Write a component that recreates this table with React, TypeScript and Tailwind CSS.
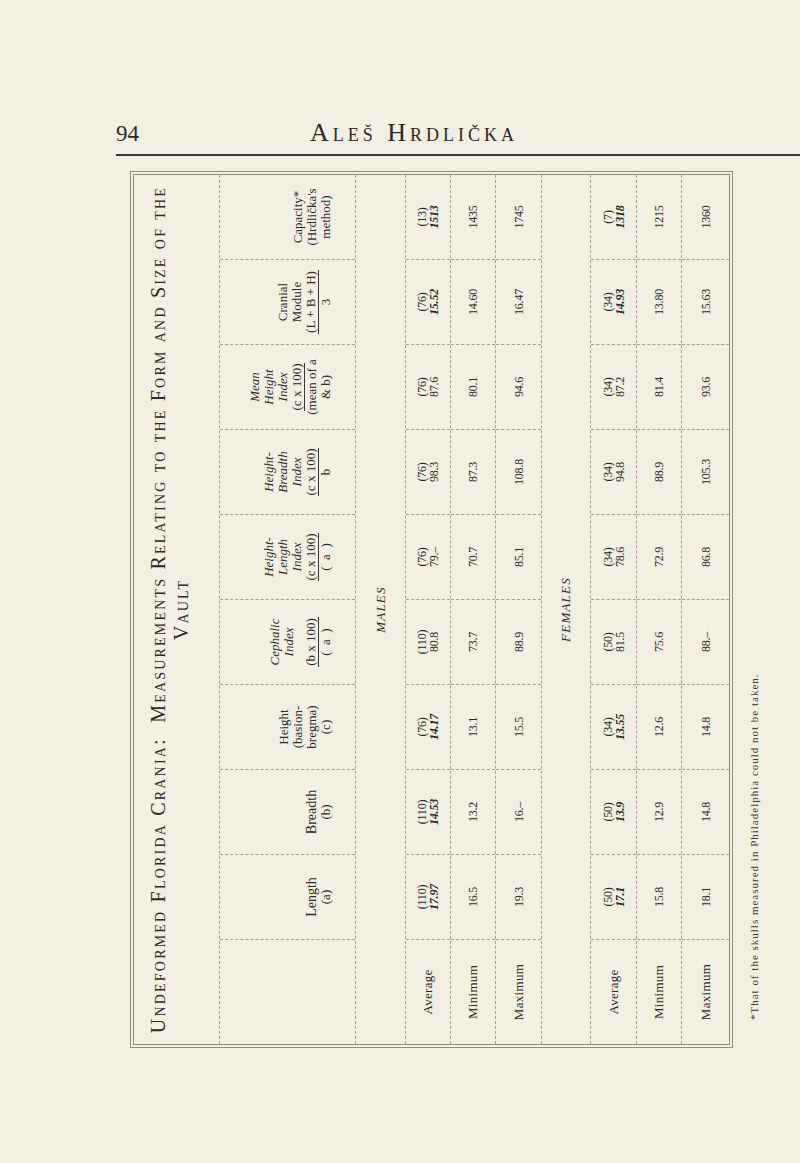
import React from "react";

type Cell = { n?: string; v: string; it?: boolean };

const malesAvg: Cell[] = [
  { n: "(110)", v: "17.97", it: true },
  { n: "(110)", v: "14.53", it: true },
  { n: "(76)", v: "14.17", it: true },
  { n: "(110)", v: "80.8" },
  { n: "(76)", v: "79.–" },
  { n: "(76)", v: "98.3" },
  { n: "(76)", v: "87.6" },
  { n: "(76)", v: "15.52", it: true },
  { n: "(13)", v: "1513", it: true },
];
const malesMin = ["16.5", "13.2", "13.1", "73.7", "70.7", "87.3", "80.1", "14.60", "1435"];
const malesMax = ["19.3", "16.–", "15.5", "88.9", "85.1", "108.8", "94.6", "16.47", "1745"];

const femalesAvg: Cell[] = [
  { n: "(50)", v: "17.1", it: true },
  { n: "(50)", v: "13.9", it: true },
  { n: "(34)", v: "13.55", it: true },
  { n: "(50)", v: "81.5" },
  { n: "(34)", v: "78.6" },
  { n: "(34)", v: "94.8" },
  { n: "(34)", v: "87.2" },
  { n: "(34)", v: "14.93", it: true },
  { n: "(7)", v: "1318", it: true },
];
const femalesMin = ["15.8", "12.9", "12.6", "75.6", "72.9", "88.9", "81.4", "13.80", "1215"];
const femalesMax = ["18.1", "14.8", "14.8", "88.–", "86.8", "105.3", "93.6", "15.63", "1360"];

function Frac({ top, bottom }: { top: string; bottom: React.ReactNode }) {
  return (
    <div className="flex flex-col items-center">
      <div className="border-b border-[#3a3833] px-[1px] leading-[14px]">{top}</div>
      <div className="leading-[14px]">{bottom}</div>
    </div>
  );
}

function HeadCell({ children, first }: { children?: React.ReactNode; first?: boolean }) {
  return (
    <div
      className={
        "flex flex-col items-center justify-end pb-[22px] text-center text-[13px] leading-[14px] " +
        (first ? "" : "border-l border-dashed border-[#a09d92]")
      }
    >
      {children}
    </div>
  );
}

function DataRow({ label, cells, h }: { label: string; cells: (Cell | string)[]; h: string }) {
  return (
    <div className={"grid grid-cols-[104px_repeat(9,minmax(0,1fr))] border-t border-dashed border-[#a09d92] " + h}>
      <div className="flex items-center justify-center text-[13px] tracking-[0.3px]">{label}</div>
      {cells.map((c, i) => {
        const cell = typeof c === "string" ? { v: c } : c;
        return (
          <div
            key={i}
            className="flex flex-col items-center justify-center border-l border-dashed border-[#a09d92] text-[12px] leading-[12px] tracking-[-0.2px]"
          >
            {cell.n && <div>{cell.n}</div>}
            <div className={cell.it ? "italic font-bold" : ""}>{cell.v}</div>
          </div>
        );
      })}
    </div>
  );
}

function SexRow({ label, h }: { label: string; h: string }) {
  return (
    <div className={"flex items-center justify-center border-t border-dashed border-[#a09d92] " + h}>
      <span className="italic text-[13px] tracking-[1.2px]">{label}</span>
    </div>
  );
}

export default function App() {
  return (
    <div className="w-[800px] h-[1163px] overflow-hidden bg-[#f3efe2] text-[#2b2a26] font-['Liberation_Serif','Times_New_Roman',serif]">
      <div className="ml-[116px] w-[596px] pt-[120px] flex items-baseline leading-none">
        <div className="w-[70px] text-[23px]">94</div>
        <div className="flex-1 text-center text-[26px] [font-variant:small-caps] tracking-[4px]">Aleš Hrdlička</div>
        <div className="w-[70px]" />
      </div>
      <div className="ml-[116px] mt-[8px] h-[2px] bg-[#3b3935]" />

      <div className="ml-[126px] mt-[12px] h-[884px] w-[650px]">
        <div className="w-[877px] origin-top-left -rotate-90 translate-x-[4px] translate-y-[880px]">
          <div className="h-[603px] border border-[#8f8c82] p-[2px]">
            <div className="h-full border border-[#8f8c82] flex flex-col">
              <div className="h-[85px] pt-[13px] flex flex-col items-center whitespace-nowrap [font-variant:small-caps] text-[20px] leading-[23px] tracking-[2.2px]">
                <div>Undeformed Florida Crania:&nbsp; Measurements Relating to the Form and Size of the</div>
                <div>Vault</div>
              </div>

              <div className="h-[136px] grid grid-cols-[104px_repeat(9,minmax(0,1fr))] border-t border-dashed border-[#a09d92]">
                <HeadCell first />
                <HeadCell>
                  <div className="text-[14px]">Length</div>
                  <div>(a)</div>
                </HeadCell>
                <HeadCell>
                  <div className="text-[14px]">Breadth</div>
                  <div>(b)</div>
                </HeadCell>
                <HeadCell>
                  <div>Height</div>
                  <div>(basion-</div>
                  <div>bregma)</div>
                  <div>(c)</div>
                </HeadCell>
                <HeadCell>
                  <div className="italic">Cephalic</div>
                  <div className="italic mb-[8px]">Index</div>
                  <Frac top="(b x 100)" bottom={<span>(&nbsp;&nbsp;a&nbsp;&nbsp;)</span>} />
                </HeadCell>
                <HeadCell>
                  <div className="italic">Height-</div>
                  <div className="italic">Length</div>
                  <div className="italic">Index</div>
                  <Frac top="(c x 100)" bottom={<span>(&nbsp;&nbsp;a&nbsp;&nbsp;)</span>} />
                </HeadCell>
                <HeadCell>
                  <div className="italic">Height-</div>
                  <div className="italic">Breadth</div>
                  <div className="italic">Index</div>
                  <Frac top="(c x 100)" bottom="b" />
                </HeadCell>
                <HeadCell>
                  <div className="italic">Mean</div>
                  <div className="italic">Height</div>
                  <div className="italic">Index</div>
                  <Frac
                    top="(c x 100)"
                    bottom={
                      <span className="flex flex-col">
                        <span>(mean of a</span>
                        <span>&amp; b)</span>
                      </span>
                    }
                  />
                </HeadCell>
                <HeadCell>
                  <div>Cranial</div>
                  <div>Module</div>
                  <Frac top="(L + B + H)" bottom="3" />
                </HeadCell>
                <HeadCell>
                  <div>Capacity*</div>
                  <div>(Hrdlička's</div>
                  <div>method)</div>
                </HeadCell>
              </div>

              <SexRow label="MALES" h="h-[50px]" />
              <DataRow label="Average" cells={malesAvg} h="h-[45px]" />
              <DataRow label="Minimum" cells={malesMin} h="h-[45px]" />
              <DataRow label="Maximum" cells={malesMax} h="h-[46px]" />
              <SexRow label="FEMALES" h="h-[49px]" />
              <DataRow label="Average" cells={femalesAvg} h="h-[46px]" />
              <DataRow label="Minimum" cells={femalesMin} h="h-[45px]" />
              <DataRow label="Maximum" cells={femalesMax} h="flex-1" />
            </div>
          </div>
          <p className="mt-[16px] pl-[28px] text-[11px] leading-[11px] tracking-[1px] text-[#3a3833]">
            *That of the skulls measured in Philadelphia could not be taken.
          </p>
        </div>
      </div>
    </div>
  );
}
